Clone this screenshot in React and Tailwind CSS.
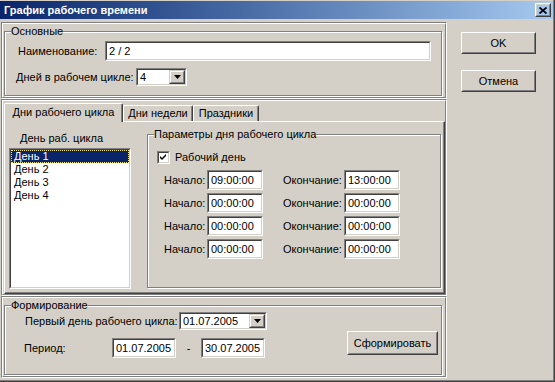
import React from "react";

function Etched({ outer = "", inner = "", children }) {
  return (
    <div className={`border border-t-[#808080] border-l-[#808080] border-r-white border-b-white ${outer}`}>
      <div className={`h-full border border-t-white border-l-white border-r-[#808080] border-b-[#808080] ${inner}`}>
        {children}
      </div>
    </div>
  );
}

function Sunken({ className = "", children }) {
  return (
    <div className={`border border-t-[#808080] border-l-[#808080] border-r-white border-b-white ${className}`}>
      <div className="h-full border border-t-[#404040] border-l-[#404040] border-r-[#d4d0c8] border-b-[#d4d0c8] bg-white flex items-center">
        {children}
      </div>
    </div>
  );
}

function Raised({ className = "", children }) {
  return (
    <div className={`border border-t-white border-l-white border-r-[#404040] border-b-[#404040] ${className}`}>
      <div className="h-full border border-t-[#d4d0c8] border-l-[#d4d0c8] border-r-[#808080] border-b-[#808080] flex items-center justify-center">
        {children}
      </div>
    </div>
  );
}

function Group({ title, className = "", children }) {
  return (
    <fieldset className={`m-0 p-0 min-w-0 border border-[#808080] shadow-[inset_1px_1px_0_#ffffff,1px_1px_0_#ffffff] ${className}`}>
      <legend className="ml-[6px] p-0 leading-[13px] bg-[#d4d0c8]">{title}</legend>
      {children}
    </fieldset>
  );
}

function Arrow() {
  return (
    <svg width="7" height="4" viewBox="0 0 7 4">
      <path d="M0 0H7L3.5 4Z" fill="#000" />
    </svg>
  );
}

function Combo({ value, className = "" }) {
  return (
    <Sunken className={className}>
      <span className="pl-[2px] flex-1">{value}</span>
      <div className="h-full w-[16px] border border-t-[#d4d0c8] border-l-[#d4d0c8] border-r-[#404040] border-b-[#404040]">
        <div className="h-full border border-t-white border-l-white border-r-[#808080] border-b-[#808080] bg-[#d4d0c8] flex items-center justify-center">
          <Arrow />
        </div>
      </div>
    </Sunken>
  );
}

function Field({ value, className = "" }) {
  return (
    <Sunken className={className}>
      <span className="pl-[2px]">{value}</span>
    </Sunken>
  );
}

const times = [
  ["09:00:00", "13:00:00"],
  ["00:00:00", "00:00:00"],
  ["00:00:00", "00:00:00"],
  ["00:00:00", "00:00:00"],
];

export default function App() {
  return (
    <div className="w-[555px] h-[382px] border-r border-b border-r-[#404040] border-b-[#404040] bg-[#d4d0c8] font-['Liberation_Sans',Arial,sans-serif] text-[11px] leading-[13px] text-black overflow-hidden">
      <div className="h-full border-r border-b border-r-[#808080] border-b-[#808080] flex flex-col">
        {/* Title bar */}
        <div className="mt-[1px] h-[18px] flex items-center bg-linear-to-r from-[#0a246a] to-[#a6caf0] pl-[4px] pr-[2px]">
          <span className="font-bold text-white">График рабочего времени</span>
          <Raised className="ml-auto w-[16px] h-[14px]">
            <svg width="8" height="7" viewBox="0 0 8 7">
              <path d="M0.5 0.5L7.5 6.5M7.5 0.5L0.5 6.5" stroke="#000" strokeWidth="1.7" />
            </svg>
          </Raised>
        </div>

        <div className="flex flex-1">
          {/* Left column */}
          <div className="w-[447px] pl-[1px] flex flex-col">
            {/* Panel 1 */}
            <Etched outer="mt-[3px] h-[77px] w-[446px]" inner="pt-[1px] pl-[1px]">
              <Group title="Основные" className="w-[438px] h-[71px]">
                <div className="mt-[3px] h-[20px] flex items-center pl-[13px]">
                  <span className="w-[87px]">Наименование:</span>
                  <Field value="2 / 2" className="w-[326px] h-[20px]" />
                </div>
                <div className="mt-[7px] h-[18px] flex items-center pl-[11px]">
                  <span className="w-[120px]">Дней в рабочем цикле:</span>
                  <Combo value="4" className="w-[51px] h-[18px]" />
                </div>
              </Group>
            </Etched>

            {/* Panel 2: tabs */}
            <Etched outer="h-[197px] w-[446px]" inner="pt-[2px] pl-[1px]">
              <div className="flex items-end h-[18px]">
                <div className="relative z-10 w-[119px] h-[19px] -mb-[1px] bg-[#d4d0c8] border-t border-l border-t-white border-l-white border-r border-r-[#404040] shadow-[inset_-1px_0_0_#808080] rounded-tl-[2px] rounded-tr-[2px] flex items-center justify-center pb-[2px]">
                  Дни рабочего цикла
                </div>
                <div className="w-[70px] h-[16px] border-t border-l border-t-white border-l-white border-r border-r-[#404040] shadow-[inset_-1px_0_0_#808080] rounded-tl-[2px] rounded-tr-[2px] flex items-center justify-center">
                  Дни недели
                </div>
                <div className="w-[66px] h-[16px] border-t border-l border-t-white border-l-white border-r border-r-[#404040] shadow-[inset_-1px_0_0_#808080] rounded-tl-[2px] rounded-tr-[2px] flex items-center justify-center">
                  Праздники
                </div>
              </div>
              <div className="w-[441px] h-[173px] border-t border-l border-t-white border-l-white border-r border-b border-r-[#404040] border-b-[#404040] shadow-[inset_-1px_-1px_0_#808080] flex pl-[4px]">
                <div className="w-[122px] pt-[10px] flex flex-col">
                  <span className="pl-[11px] leading-[13px]">День раб. цикла</span>
                  <div className="mt-[3px] h-[141px] border border-t-[#808080] border-l-[#808080] border-r-white border-b-white">
                    <div className="h-full border border-t-[#404040] border-l-[#404040] border-r-[#d4d0c8] border-b-[#d4d0c8] bg-white">
                      <div className="h-[13px] leading-[11px] pl-[2px] bg-[#0a246a] text-white border border-dotted border-[#f0e08c]">День 1</div>
                      <div className="h-[13px] leading-[13px] pl-[3px]">День 2</div>
                      <div className="h-[13px] leading-[13px] pl-[3px]">День 3</div>
                      <div className="h-[13px] leading-[13px] pl-[3px]">День 4</div>
                    </div>
                  </div>
                </div>
                <Group title="Параметры дня рабочего цикла" className="ml-[16px] mt-[6px] w-[294px] h-[160px]">
                  <div className="mt-[10px] pl-[9px] flex items-center h-[13px]">
                    <div className="w-[13px] h-[13px] border border-t-[#808080] border-l-[#808080] border-r-white border-b-white">
                      <div className="h-full border border-t-[#404040] border-l-[#404040] border-r-[#d4d0c8] border-b-[#d4d0c8] bg-white flex items-center justify-center">
                        <svg width="7" height="7" viewBox="0 0 7 7">
                          <path d="M0 2L2 4L6 0V2L2 6L0 4Z" fill="#000" />
                        </svg>
                      </div>
                    </div>
                    <span className="ml-[5px]">Рабочий день</span>
                  </div>
                  <div className="mt-[6px] pl-[16px] flex flex-col gap-[3px]">
                    {times.map(([a, b], i) => (
                      <div key={i} className="flex items-center h-[20px]">
                        <span className="w-[43px]">Начало:</span>
                        <Field value={a} className="w-[56px] h-[20px]" />
                        <span className="ml-[20px] w-[61px]">Окончание:</span>
                        <Field value={b} className="w-[56px] h-[20px]" />
                      </div>
                    ))}
                  </div>
                </Group>
              </div>
            </Etched>

            {/* Panel 3 */}
            <Etched outer="h-[82px] w-[446px]" inner="pt-[1px] pl-[1px]">
              <Group title="Формирование" className="w-[438px] h-[76px]">
                <div className="flex">
                  <div className="flex flex-col">
                    <div className="h-[18px] flex items-center pl-[20px]">
                      <span className="w-[154px]">Первый день рабочего цикла:</span>
                      <Combo value="01.07.2005" className="w-[88px] h-[18px]" />
                    </div>
                    <div className="mt-[8px] h-[20px] flex items-center pl-[19px]">
                      <span className="w-[88px]">Период:</span>
                      <Field value="01.07.2005" className="w-[64px] h-[20px]" />
                      <span className="w-[25px] text-center">-</span>
                      <Field value="30.07.2005" className="w-[64px] h-[20px]" />
                    </div>
                  </div>
                  <Raised className="ml-[80px] mt-[19px] w-[91px] h-[24px]">Сформировать</Raised>
                </div>
              </Group>
            </Etched>
          </div>

          {/* Right column */}
          <div className="pl-[14px] pt-[13px] flex flex-col">
            <Raised className="w-[75px] h-[22px]">OK</Raised>
            <Raised className="mt-[16px] w-[75px] h-[22px]">Отмена</Raised>
          </div>
        </div>
      </div>
    </div>
  );
}
